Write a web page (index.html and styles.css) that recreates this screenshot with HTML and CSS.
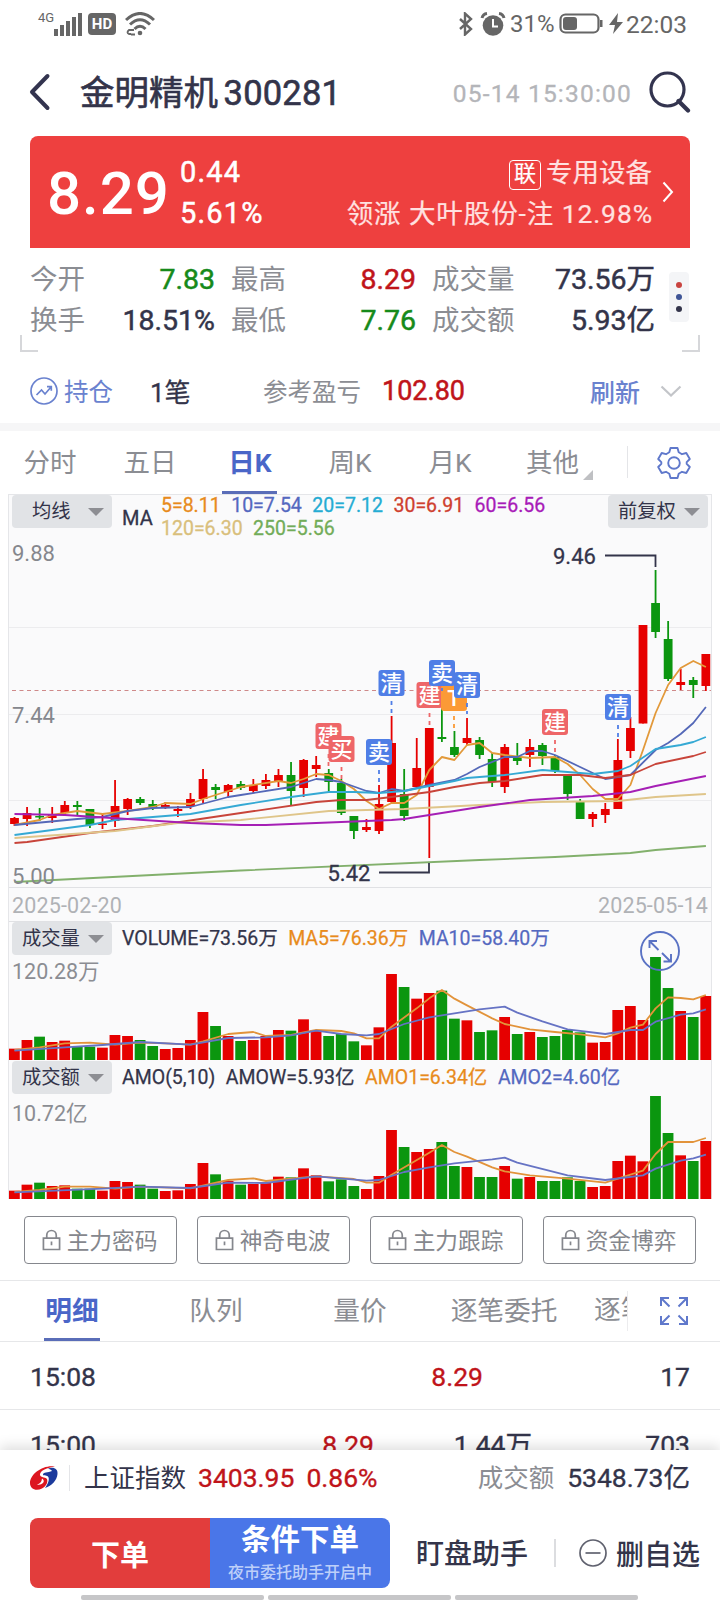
FILE: index.html
```html
<!DOCTYPE html>
<html lang="zh-CN">
<head>
  <meta charset="UTF-8">
  <meta name="viewport" content="width=device-width, initial-scale=1.0">
  <title>金明精机 300281</title>
  <link rel="stylesheet" href="styles.css">
</head>
<body>
  <div class="page">
    <div class="status">
      <span class="net">4G</span>
      <svg class="signal" width="29" height="24" viewBox="0 0 29 24"><path d="M2 17v7M8 13v11M14 9v15M20 5v19M26 1v23" stroke="#666" stroke-width="4"/></svg>
      <span class="hd">HD</span>
      <svg class="wifi" width="30" height="24" viewBox="0 0 30 24" fill="none" stroke="#666" stroke-width="3">
        <path d="M1 8Q15-5 29 8M5 12.500Q15 3 25 12.500M9.500 17Q15 11.500 20.500 17"/>
        <circle cx="15" cy="21" r="2.300" fill="#666" stroke="none"/>
        <path d="M9 18H4q-3 2.500 0 4h2M6 22.500h4" stroke-width="1.800"/>
      </svg>
      <div class="status-right">
        <svg width="16" height="24" viewBox="0 0 16 24" fill="none" stroke="#666" stroke-width="2.400"><path d="M2 7l11 10-6 5.500V1.500L13 7 2 17"/></svg>
        <svg class="alarm" width="26" height="24" viewBox="0 0 26 24">
          <circle cx="13" cy="13.500" r="10.300" fill="#666"/>
          <path d="M2 6Q3 2 7 1.500M24 6q-1-4-5-4.500" stroke="#666" stroke-width="3" fill="none"/>
          <path d="M13 7v7.500h5" stroke="#fff" stroke-width="2" fill="none"/>
        </svg>
        <span class="percent">31%</span>
        <svg class="battery" width="44" height="22" viewBox="0 0 44 22">
          <rect x="1.500" y="1.500" width="38" height="18" rx="5" fill="none" stroke="#666" stroke-width="2.200"/>
          <rect x="4" y="4" width="14" height="13" rx="3" fill="#666"/>
          <rect x="41" y="7" width="2.500" height="7" fill="#666"/>
        </svg>
        <svg class="bolt" width="16" height="22" viewBox="0 0 16 22"><path d="M10 0L1 12h6L5 21 15 9H9z" fill="#666"/></svg>
        <span class="clock">22:03</span>
      </div>
    </div>

    <div class="title-bar">
      <svg width="22" height="38" viewBox="0 0 22 38"><path d="M18.500 3L3 19l15.500 16" fill="none" stroke="#33344f" stroke-width="4" stroke-linecap="round" stroke-linejoin="round"/></svg>
      <h1>金明精机 <span>300281</span></h1>
      <span class="datetime">05-14 15:30:00</span>
      <svg class="search" width="42" height="42" viewBox="0 0 42 42" fill="none" stroke="#33344f"><circle cx="18.500" cy="18.500" r="16.500" stroke-width="3.200"/><path d="M29.500 30l9.500 9.500" stroke-width="4.200" stroke-linecap="round"/></svg>
    </div>

    <div class="banner">
      <div class="price">8.29</div>
      <div class="change"><span>0.44</span><span>5.61%</span></div>
      <div class="sector">
        <div><span class="tag">联</span>专用设备</div>
        <div>领涨 大叶股份-注 12.98%</div>
      </div>
      <svg width="12" height="22" viewBox="0 0 12 22"><path d="M1.500 1.500l8.500 9.500-8.500 9.500" fill="none" stroke="#fff" stroke-width="2"/></svg>
    </div>

    <div class="quote">
      <div class="quote-grid">
        <span class="label">今开</span><span class="down">7.83</span>
        <span class="label">最高</span><span class="up">8.29</span>
        <span class="label">成交量</span><span>73.56万</span>
        <span class="label">换手</span><span>18.51%</span>
        <span class="label">最低</span><span class="down">7.76</span>
        <span class="label">成交额</span><span>5.93亿</span>
      </div>
      <div class="dots"><i></i><i></i><i></i></div>
      <div class="corner left"></div>
      <div class="corner right"></div>
    </div>

    <div class="position">
      <svg width="28" height="28" viewBox="0 0 28 28" fill="none" stroke="#6a82cf" stroke-width="1.700"><circle cx="14" cy="14" r="13"/><path d="M6.500 18l5-5 3.500 4 6-7M17 9.700h4.300v4"/></svg>
      <span class="hold">持仓</span>
      <span class="count">1笔</span>
      <span class="profit-label">参考盈亏</span>
      <span class="profit">102.80</span>
      <span class="refresh">刷新</span>
      <svg width="22" height="12" viewBox="0 0 22 12"><path d="M1.500 1.500l9.500 9 9.500-9" fill="none" stroke="#c3c5c9" stroke-width="2.200"/></svg>
    </div>

    <div class="period-tabs">
      <span>分时</span><span>五日</span><span class="active">日K</span><span>周K</span><span>月K</span><span class="more">其他</span>
      <div class="settings">
        <svg width="34" height="34" viewBox="0 0 34 34" fill="none" stroke="#5f78cb" stroke-width="1.900" stroke-linejoin="round">
          <path d="M13.500 2h7l1.200 4.300 3.300 1.900 4.300-1.200 3.500 6-3.100 3.100v1.800l3.100 3.100-3.500 6-4.300-1.200-3.300 1.900-1.200 4.300h-7l-1.200-4.300L9 25.800 4.700 27l-3.500-6 3.100-3.100v-1.800L1.200 13l3.500-6L9 8.200l3.300-1.900z"/><circle cx="17" cy="17" r="5.800"/>
        </svg>
      </div>
    </div>

    <div class="chart">
      <div class="price-pane">
        <svg id="price" width="704" height="393" viewBox="8 494 704 393"></svg>
        <div class="pane-head">
          <span class="select">均线</span>
          <span class="ma-name">MA</span>
          <div class="ma-list">
            <span class="c5">5=8.11</span><span class="c10">10=7.54</span><span class="c20">20=7.12</span><span class="c30">30=6.91</span><span class="c60">60=6.56</span><br><span class="c120">120=6.30</span><span class="c250">250=5.56</span>
          </div>
          <span class="select adjust">前复权</span>
        </div>
      </div>
      <div class="dates"><span>2025-02-20</span><span>2025-05-14</span></div>
      <div class="bar-pane">
        <svg id="volume" width="704" height="138" viewBox="8 922 704 138"></svg>
        <div class="pane-head">
          <span class="select">成交量</span>
          <div class="values"><span>VOLUME=73.56万</span><span class="c5">MA5=76.36万</span><span class="c10">MA10=58.40万</span></div>
        </div>
        <div class="scale">120.28万</div>
        <svg class="zoom" width="40" height="40" viewBox="0 0 40 40" fill="none" stroke="#5a72c4" stroke-width="1.900"><circle cx="20" cy="20" r="19"/><path d="M9.500 17v-7H17M9.500 10l9 9M22 22l8.500 8.500M31 23v7.500h-7.500"/></svg>
      </div>
      <div class="bar-pane amount-pane">
        <svg id="amount" width="704" height="139" viewBox="8 1060 704 139"></svg>
        <div class="pane-head">
          <span class="select">成交额</span>
          <div class="values"><span>AMO(5,10)</span><span>AMOW=5.93亿</span><span class="c5">AMO1=6.34亿</span><span class="c10">AMO2=4.60亿</span></div>
        </div>
        <div class="scale">10.72亿</div>
      </div>
    </div>

    <div class="tools">
      <button><svg class="lock" viewBox="0 0 20 22"><path d="M1.500 9h17v12h-17zM5 9V6a5 5 0 0 1 10 0v3M10 12.500v4"/></svg>主力密码</button>
      <button><svg class="lock" viewBox="0 0 20 22"><path d="M1.500 9h17v12h-17zM5 9V6a5 5 0 0 1 10 0v3M10 12.500v4"/></svg>神奇电波</button>
      <button><svg class="lock" viewBox="0 0 20 22"><path d="M1.500 9h17v12h-17zM5 9V6a5 5 0 0 1 10 0v3M10 12.500v4"/></svg>主力跟踪</button>
      <button><svg class="lock" viewBox="0 0 20 22"><path d="M1.500 9h17v12h-17zM5 9V6a5 5 0 0 1 10 0v3M10 12.500v4"/></svg>资金博弈</button>
    </div>

    <div class="detail-tabs">
      <span class="active">明细</span><span>队列</span><span>量价</span><span>逐笔委托</span><span class="cut">逐笔</span>
      <svg width="28" height="28" viewBox="0 0 28 28" fill="none" stroke="#5f78cb" stroke-width="2"><path d="M1 9V1h8M1 1l8.500 8.500M19 1h8v8M27 1l-8.500 8.500M1 19v8h8M1 27l8.500-8.500M27 19v8h-8M27 27l-8.500-8.500"/></svg>
    </div>

    <div class="ticks">
      <div class="tick"><span>15:08</span><span class="up wide">8.29</span><span>17</span></div>
      <div class="tick"><span>15:00</span><span class="up">8.29</span><span class="lots">1.44万</span><span>703</span></div>
    </div>

    <div class="footer">
      <div class="index">
        <svg width="28" height="24" viewBox="0 0 28 24">
          <path d="M18 2.500C24 .5 28 3 27.500 8 27 14 22 20 15 22 18 18 20 13 18 10.500 16 9 13 10 13 8.500 13 6 18 7 22 5 21 3.500 19.500 3 18 2.500z" fill="#1c3a9c"/>
          <path d="M25 .5C13-1.500 0 8 0 17 0 23 6 25.500 12 22.500 17 20 18.500 14.500 16.500 12.500 15 11 10.500 11.500 10 9 9.500 5 17 1.500 25 .5z" fill="#dc1620"/>
          <path d="M12 12.500q3 2 1 4.500-2.500 2.500-6 1.500 4.500-1 5-6z" fill="#fff"/>
        </svg>
        <span class="name">上证指数</span><span class="up">3403.95</span><span class="up pct">0.86%</span>
        <span class="turnover">成交额</span><span>5348.73亿</span>
      </div>
      <div class="actions">
        <button class="order">下单</button>
        <button class="condition">条件下单<small>夜市委托助手开启中</small></button>
        <span class="watch">盯盘助手</span>
        <span class="remove"><svg width="28" height="28" viewBox="0 0 28 28" fill="none" stroke="#60626f" stroke-width="1.700"><circle cx="14" cy="14" r="13"/><path d="M6.500 14h15"/></svg>删自选</span>
      </div>
      <div class="nav"><i></i><i></i><i></i></div>
    </div>
  </div>
  <script src="chart.js"></script>
</body>
</html>
```
FILE: styles.css
```css
* {
  box-sizing: border-box;
}
body {
  margin: 0;
  background: #fff;
  font-family: Roboto, "Noto Sans CJK SC", sans-serif;
  color: #33344a;
}
.page {
  width: 720px;
  height: 1600px;
  overflow: hidden;
  display: flex;
  flex-direction: column;
}
.page > div {
  flex: none;
}
svg {
  display: block;
  flex: none;
}
button {
  font-family: inherit;
  padding: 0;
}
.up {
  color: #c0141a;
}
.down {
  color: #168a1a;
}

/* status bar */
.status {
  height: 48px;
  padding: 0 33px 0 38px;
  display: flex;
  align-items: center;
  color: #666;
}
.net {
  width: 16px;
  font-size: 13px;
  margin-top: -14px;
}
.hd {
  width: 28px;
  height: 22px;
  margin: 0 9px 0 5px;
  border-radius: 4px;
  background: #666;
  color: #fff;
  font-size: 15px;
  font-weight: 700;
  line-height: 22px;
  text-align: center;
}
.status-right {
  margin-left: auto;
  display: flex;
  align-items: center;
  font-size: 24.500px;
}
.alarm {
  margin: 0 4px 0 6px;
}
.percent {
  width: 49px;
  font-size: 24px;
}
.bolt {
  margin: 0 2px 0 5px;
}

/* title */
.title-bar {
  height: 88px;
  padding: 0 29px;
  display: flex;
  align-items: center;
}
h1 {
  margin: -4px 0 0 29px;
  font-size: 34.500px;
  font-weight: 400;
  -webkit-text-stroke: 0.600px;
  white-space: nowrap;
}
h1 span {
  margin-left: -3px;
  letter-spacing: 0.200px;
}
.datetime {
  margin: 2px 17px 0 auto;
  color: #b4b5b9;
  font-size: 24.500px;
  -webkit-text-stroke: 0.300px;
  letter-spacing: 1.200px;
}

/* red banner */
.banner {
  height: 112px;
  margin: 0 30px;
  padding: 0 16px 0 17px;
  border-radius: 8px 8px 0 0;
  background: #ee403f;
  color: #fff;
  display: flex;
  align-items: center;
}
.price {
  width: 133px;
  font-size: 60px;
  font-weight: 500;
  letter-spacing: 1px;
  line-height: 112px;
  padding-top: 3px;
}
.change {
  display: flex;
  flex-direction: column;
  font-size: 29px;
  -webkit-text-stroke: 0.500px;
  line-height: 41px;
  letter-spacing: 1.200px;
  padding-top: 2px;
}
.sector {
  margin: 2px 9px 0 auto;
  font-size: 26.500px;
  line-height: 41px;
  text-align: right;
  color: #ffe1e0;
  -webkit-text-stroke: 0.200px;
  letter-spacing: 0.900px;
  white-space: nowrap;
}
.sector div:first-child {
  letter-spacing: 0;
  padding-right: 1px;
}
.tag {
  display: inline-block;
  width: 32px;
  height: 30px;
  margin-right: 5px;
  border: 1.500px solid #fff;
  border-radius: 4px;
  color: #fff;
  font-size: 22px;
  line-height: 26px;
  text-align: center;
  vertical-align: 1px;
}

/* quote numbers */
.quote {
  position: relative;
  height: 104px;
  padding: 12px 0 0 30px;
}
.quote-grid {
  display: grid;
  grid-template-columns: 70px 115px 80px 121px 100px 139px;
  font-size: 28.500px;
  -webkit-text-stroke: 0.500px;
  line-height: 40.500px;
}
.quote-grid span:nth-child(even) {
  text-align: right;
}
.quote-grid span:nth-child(6n+3),
.quote-grid span:nth-child(6n+5) {
  padding-left: 16px;
}
.quote-grid .label {
  color: #8b8d93;
  font-size: 27.500px;
  -webkit-text-stroke: 0;
}
.dots {
  position: absolute;
  left: 669px;
  top: 24px;
  width: 20px;
  height: 50px;
  border-radius: 4px;
  background: #f4f5f7;
  display: flex;
  flex-direction: column;
  align-items: center;
  justify-content: center;
  gap: 6px;
}
.dots i {
  width: 6px;
  height: 6px;
  border-radius: 50%;
  background: #33344a;
}
.dots i:nth-child(1) {
  background: #c94440;
}
.dots i:nth-child(2) {
  background: #3f5596;
}
.corner {
  position: absolute;
  bottom: 0;
  width: 18px;
  height: 17px;
  border: 2px solid #d6d7da;
  border-top: 0;
}
.corner.left {
  left: 20px;
  border-right: 0;
}
.corner.right {
  right: 20px;
  border-left: 0;
}

/* position row */
.position {
  height: 79px;
  padding: 6px 38px 0 30px;
  border-bottom: 8px solid #f6f6f7;
  display: flex;
  align-items: center;
  font-size: 24.500px;
}
.hold {
  width: 86px;
  padding-left: 6px;
  color: #6a82cf;
}
.count {
  width: 119px;
  padding-left: 6px;
  font-size: 26px;
  -webkit-text-stroke: 0.300px;
}
.profit-label {
  color: #8b8d93;
}
.profit {
  margin-left: 21px;
  font-size: 27px;
  -webkit-text-stroke: 0.500px;
  color: #c0141a;
}
.refresh {
  margin: 0 20px 0 auto;
  font-size: 25px;
  font-weight: 500;
  color: #6a82cf;
}

/* chart period */
.period-tabs {
  height: 63px;
  display: flex;
  font-size: 26.500px;
  line-height: 64px;
  color: #8b8d93;
}
.period-tabs > span {
  width: 100px;
  height: 63px;
  text-align: center;
}
.period-tabs .active {
  position: relative;
  color: #4a66c8;
  font-weight: 700;
}
.period-tabs .active::after {
  content: "";
  position: absolute;
  left: 22px;
  bottom: 0;
  width: 55px;
  height: 3px;
  background: #5a6db8;
}
.period-tabs .more {
  position: relative;
  width: 105px;
}
.more::after {
  content: "";
  position: absolute;
  left: 83px;
  top: 39px;
  border-left: 10px solid transparent;
  border-bottom: 10px solid #bfc0c3;
}
.settings {
  width: 93px;
  height: 32px;
  margin-left: 22px;
  margin-top: 15px;
  border-left: 1px solid #e4e5e8;
  padding-left: 29px;
}

/* chart */
.chart {
  width: 704px;
  margin-left: 8px;
  border: 1px solid #e5e6e9;
  border-bottom: 0;
  background: #fafafb;
  height: 705px;
  display: flex;
  flex-direction: column;
}
.chart svg text {
  font-family: Roboto, "Noto Sans CJK SC", sans-serif;
}
.price-pane,
.bar-pane {
  position: relative;
  height: 138px;
}
.price-pane {
  height: 392px;
}
.price-pane > svg,
.bar-pane > svg {
  position: absolute;
  left: -1px;
  top: -1px;
}
.bar-pane > svg {
  top: 0;
}
.pane-head {
  position: relative;
  padding: 0 3px;
  height: 33px;
  display: flex;
}
.select {
  width: 100px;
  height: 33px;
  padding: 0 8px 0 10px;
  border-radius: 4px;
  background: #e1e3e6;
  font-size: 19.300px;
  line-height: 35px;
  display: flex;
  align-items: center;
  justify-content: space-between;
}
.select::after {
  content: "";
  border: 8px solid transparent;
  border-top-color: #8d8e93;
  border-bottom: 0;
}
.price-pane .select:first-child {
  padding-left: 20px;
}
.ma-name {
  width: 30px;
  margin: 11px 9px 0 10px;
  font-size: 20px;
  -webkit-text-stroke: 0.300px;
  line-height: 24px;
}
.ma-list {
  font-size: 19.500px;
  -webkit-text-stroke: 0.300px;
  line-height: 23px;
  white-space: nowrap;
  margin-top: -1px;
}
.ma-list span {
  margin-right: 10.500px;
}
.adjust {
  margin-left: auto;
}
.values {
  display: flex;
  gap: 10.500px;
  margin-left: 10px;
  font-size: 19.500px;
  -webkit-text-stroke: 0.250px;
  line-height: 33px;
  white-space: nowrap;
}
.scale {
  position: relative;
  margin: 0 0 0 3px;
  font-size: 21.500px;
  line-height: 33px;
  color: #8b8d93;
}
.amount-pane .pane-head {
  padding-top: 1px;
}
.amount-pane .scale {
  margin-top: 4px;
}
.bar-pane > svg.zoom {
  left: 631px;
  top: 9px;
}
.c5 { color: #e88b1c; }
.c10 { color: #5468c0; }
.c20 { color: #25acd3; }
.c30 { color: #cf3f2f; }
.c60 { color: #a81bb8; }
.c120 { color: #d9bf7c; }
.c250 { color: #72ac58; }
.dates {
  height: 35px;
  padding: 0 3px;
  border-top: 1px solid #e0e1e4;
  border-bottom: 1px solid #e0e1e4;
  display: flex;
  justify-content: space-between;
  font-size: 21.500px;
  line-height: 35px;
  color: #b0b2b6;
  letter-spacing: 0.150px;
}

/* locked indicators */
.tools {
  height: 82px;
  padding: 17px 24px 0;
  border-bottom: 1px solid #e6e7e9;
  display: flex;
  justify-content: space-between;
}
.tools button {
  width: 153px;
  height: 48px;
  padding: 0 2px 1px 0;
  border: 1px solid #85878d;
  border-radius: 4px;
  background: #fff;
  color: #85878d;
  font-size: 22.700px;
  display: flex;
  align-items: center;
  justify-content: center;
  gap: 6px;
}
.lock {
  width: 19px;
  height: 22px;
  fill: none;
  stroke: #85878d;
  stroke-width: 1.800;
}

/* details */
.detail-tabs {
  height: 61px;
  border-bottom: 1px solid #e6e7e9;
  display: flex;
  align-items: center;
  font-size: 26.700px;
  line-height: 61px;
  color: #8b8d93;
}
.detail-tabs span {
  width: 144px;
  height: 60px;
  text-align: center;
  white-space: nowrap;
}
.detail-tabs .active {
  position: relative;
  color: #4a66c8;
  font-weight: 700;
}
.detail-tabs .active::after {
  content: "";
  position: absolute;
  left: 44px;
  bottom: 0;
  width: 56px;
  height: 3px;
  background: #5a6db8;
}
.detail-tabs .cut {
  width: 34px;
  height: 40px;
  line-height: 39px;
  margin: 0 32px 0 18px;
  overflow: hidden;
  text-align: left;
  border-right: 1px solid #ececee;
}
.ticks {
  height: 108px;
  overflow: hidden;
}
.tick {
  height: 68px;
  padding: 0 30px;
  border-bottom: 1px solid #e6e7e9;
  display: grid;
  grid-template-columns: 240px 104px 158px 1fr;
  font-size: 26.500px;
  -webkit-text-stroke: 0.350px;
  line-height: 70px;
}
.tick span:not(:first-child) {
  text-align: right;
}
.tick .wide {
  grid-column: 2 / 4;
  padding-right: 49px;
}

/* bottom panel */
.footer {
  position: relative;
  height: 150px;
  background: #fff;
  box-shadow: 0 -4px 12px rgba(0, 0, 0, 0.13);
  display: flex;
  flex-direction: column;
}
.index {
  height: 56px;
  padding: 0 30px;
  display: flex;
  align-items: center;
  font-size: 26.500px;
  -webkit-text-stroke: 0.350px;
  line-height: 26px;
}
.index .name {
  margin: 0 12px 0 11px;
  padding-left: 14px;
  border-left: 1px solid #e4e5e8;
  font-size: 25.500px;
  -webkit-text-stroke: 0;
}
.index .pct {
  margin-left: 12px;
}
.index .turnover {
  margin: 0 13px 0 auto;
  color: #8b8d93;
  font-size: 25.500px;
  -webkit-text-stroke: 0;
}
.actions {
  height: 70px;
  margin-top: 12px;
  padding-left: 30px;
  display: flex;
  align-items: center;
  font-size: 28px;
  font-weight: 500;
}
.actions button {
  width: 180px;
  height: 70px;
  border: 0;
  color: #fff;
  font-size: 29px;
  font-weight: 700;
}
.actions .order {
  background: #e23d3c;
  border-radius: 8px 0 0 8px;
  padding-bottom: 1px;
}
.actions .condition {
  background: #4a76e8;
  border-radius: 0 8px 8px 0;
  font-size: 29.500px;
  line-height: 38px;
  padding-top: 2px;
}
.condition small {
  display: block;
  font-size: 16px;
  font-weight: 500;
  line-height: 28px;
  color: #bdcff9;
}
.watch {
  margin: -2px 26px 0;
}
.remove {
  height: 28px;
  padding-left: 23px;
  border-left: 2px solid #dcdde0;
  display: flex;
  align-items: center;
  gap: 9px;
}
.nav {
  margin: 7px 0 0 81px;
  display: flex;
  gap: 4px;
}
.nav i {
  width: 183px;
  height: 5px;
  border-radius: 2px;
  background: #c6c6c8;
}
```
FILE: chart.js
```js
const RED = '#e60000';
const GREEN = '#0b960f';
const STEP = 12.57;
const cx = i => 14.5 + i * STEP;

// color, high, body top, body bottom, low
const candles = [
  ['R', 817, 818, 824, 826], ['R', 807, 813, 819, 826], ['G', 808, 816, 817, 821], ['R', 807, 815, 818, 823],
  ['R', 801, 805, 813, 815], ['G', 801, 805, 807, 815], ['G', 809, 809, 825, 828], ['R', 814, 823.5, 825, 829],
  ['R', 780, 806, 821, 827], ['R', 798, 799, 809, 815], ['G', 797, 799, 803, 805], ['G', 800, 804, 807, 810],
  ['R', 802, 805, 807, 809], ['R', 806, 809, 811, 817], ['R', 793, 799, 806, 809], ['R', 769, 779, 799, 803],
  ['G', 784, 787, 790, 799], ['R', 784, 785, 792, 797], ['G', 781, 784, 788, 790], ['R', 779, 785, 791, 793],
  ['R', 774, 780, 786, 789], ['R', 769, 775, 782, 787], ['G', 762, 775, 791, 805], ['R', 759, 760, 788, 797],
  ['R', 756, 765, 769, 777], ['G', 769, 773, 782, 791], ['G', 779, 783, 813, 815], ['G', 816, 816, 831, 839],
  ['R', 819, 827, 830, 832], ['R', 785, 804, 831, 834], ['R', 716, 743, 802, 803], ['G', 769, 794, 816, 821],
  ['R', 738, 768, 787, 787], ['R', 728, 728, 787, 858], ['G', 707, 737, 739, 742], ['G', 731, 747, 755, 757],
  ['R', 718, 738, 743, 745], ['G', 737, 740, 755, 759], ['G', 753, 759, 782, 787], ['R', 744, 747, 787, 793],
  ['G', 743, 757, 761, 765], ['R', 739, 747, 755, 767], ['G', 743, 745, 756, 765], ['G', 755, 757, 771, 773],
  ['G', 775, 776, 794, 800], ['G', 799, 802, 819, 819], ['R', 812, 814, 819, 827], ['R', 803, 809, 815, 823],
  ['R', 739, 760, 809, 809], ['R', 717, 728, 751, 758], ['R', 625, 625, 723.5, 723.5], ['G', 570, 603, 632, 638],
  ['G', 621, 639, 679, 681], ['R', 669, 682, 685, 690], ['G', 677, 680, 685, 698], ['R', 654, 654, 686, 691]
];

// [index, y] pairs
const averages = [
  ['#e2993a', [[0, 825], [2, 820], [3, 815], [5, 811], [7, 814], [9, 811], [11, 807], [12, 803], [14, 804], [15, 799], [16, 795], [18, 787], [19, 785], [21, 781], [22, 783], [23, 779], [24, 774], [25, 775], [26, 781], [27, 789], [28, 801], [29, 809], [30, 803], [31, 803], [32, 795], [33, 770], [34, 757], [35, 760], [36, 745], [37, 743], [38, 753], [39, 755], [41, 758], [43, 757], [44, 764], [45, 775], [46, 789], [47, 799], [48, 799], [49, 785], [50, 750], [51, 713], [52, 685], [53, 668], [54, 661], [55, 667]]],
  ['#5468b8', [[0, 825], [5, 819], [7, 817], [9, 811], [11, 808], [14, 807], [17, 797], [18, 795], [22, 787], [24, 779], [25, 780], [26, 782], [28, 791], [29, 793], [30, 789], [31, 791], [33, 785], [35, 780], [36, 774], [37, 767], [39, 757], [40, 757], [41, 751], [42, 751], [43, 755], [45, 767], [47, 779], [49, 775], [51, 750], [52, 743], [53, 734], [54, 723], [55, 707]]],
  ['#35a9d4', [[0, 835], [6, 825], [8, 820], [11, 817], [14, 814], [18, 805], [22, 797], [25, 792], [27, 792], [29, 793], [31, 791], [33, 786], [35, 781], [36, 778], [37, 777], [39, 775], [42, 770], [46, 774], [48, 771], [49, 766], [51, 749], [53, 745], [54, 742], [55, 737]]],
  ['#c8443a', [[0, 843], [1, 842], [6, 833], [11, 826], [18, 813], [24, 802], [26, 800], [28, 800], [30, 797], [33, 792], [35, 787], [37, 783], [39, 781], [42, 775], [45, 775], [47, 778], [49, 775], [51, 764], [54, 756], [55, 752]]],
  ['#dfc58a', [[0, 838], [8, 831], [13, 823], [18, 820], [25, 811], [31, 809], [37, 805], [42, 802], [48, 801], [51, 797], [55, 794]]],
  ['#a51fb5', [[0, 814], [4, 815], [9, 819], [14, 823], [18, 825], [20, 825], [26, 822], [30, 820], [31, 819], [33, 815], [37, 807], [41, 800], [46, 796], [49, 792], [51, 786], [55, 776]]],
  ['#82b06c', [[0, 882], [18, 870.5], [37, 860], [43, 857], [49, 853], [51, 850], [55, 846]]]
];

// x, y, text, color, end of the dashed stem
const marks = [
  [328.5, 736, '建', '#ee6668', 766], [341.5, 749, '买', '#ee6668', 779], [379, 752, '卖', '#4f7ee6', 784],
  [391.5, 683, '清', '#4f7ee6', 714], [429.5, 695, '建', '#ee6668', 725], [454, 698, 'T', '#fb9a36', 728],
  [442, 673, '卖', '#4f7ee6', 688], [467, 685, '清', '#4f7ee6', 714], [555, 722, '建', '#ee6668', 752], [618, 707, '清', '#4f7ee6', 738]
];

const volumeTops = [506, 480, 470, 486, 482, 500, 500, 503, 465, 468, 480, 498, 507, 504, 480, 396, 438, 468, 483, 480, 468, 450, 452, 418, 450, 468, 462, 484, 496, 442, 282, 321, 356, 339, 332, 416, 421, 456, 451, 411, 462, 456, 471, 468, 450, 457, 488, 486, 390, 378, 420, 231, 324, 393, 411, 348];
const amountTops = [932, 914, 908, 918, 916, 926, 926, 932, 903, 906, 914, 926, 933, 931, 912, 849, 883, 903, 914, 912, 906, 890, 892, 865, 886, 904, 898, 918, 927, 888, 750, 801, 816, 807, 786, 858, 861, 891, 891, 858, 896, 891, 903, 903, 892, 903, 921, 918, 843, 827, 844, 648, 759, 826, 843, 783];
const volumeLines = [
  ['#e2933a', [[0, 510], [2, 502], [4, 490], [6, 488], [8, 494], [10, 488], [12, 490], [14, 494], [15, 484], [17, 462], [19, 456], [20, 468], [22, 465], [24, 450], [26, 453], [27, 460], [28, 475], [29, 475], [30, 440], [32, 385], [33, 355], [34, 330], [35, 356], [36, 376], [38, 415], [39, 432], [41, 448], [43, 456], [45, 463], [47, 472], [48, 460], [49, 443], [50, 434], [51, 385], [52, 352], [53, 354], [54, 358], [55, 345]]],
  ['#6673c4', [[0, 512], [4, 502], [7, 495], [10, 486], [14, 494], [17, 474], [20, 472], [22, 466], [24, 452], [26, 462], [28, 466], [29, 462], [31, 432], [33, 412], [35, 400], [37, 388], [39, 380], [40, 398], [42, 424], [44, 448], [47, 462], [49, 450], [50, 450], [51, 425], [53, 404], [54, 400], [55, 388]]]
];
const amountLines = [
  ['#e2933a', [[0, 936], [2, 930], [4, 920], [6, 920], [8, 926], [10, 920], [14, 925], [17, 900], [19, 895], [20, 903], [24, 889], [27, 897], [28, 908], [29, 908], [30, 884], [33, 818], [34, 795], [35, 816], [36, 830], [38, 862], [39, 874], [41, 886], [44, 896], [47, 908], [49, 884], [50, 872], [51, 822], [52, 786], [54, 786], [55, 774]]],
  ['#6673c4', [[0, 937], [7, 926], [10, 920], [14, 924], [17, 908], [20, 909], [24, 889], [28, 902], [29, 900], [31, 876], [33, 862], [35, 850], [38, 838], [39, 833], [40, 848], [44, 886], [47, 900], [50, 886], [51, 866], [53, 842], [54, 835], [55, 824]]]
];

function polyline(color, points) {
  const list = points.map(p => cx(p[0]).toFixed(1) + ',' + p[1]).join(' ');
  return `<polyline points="${list}" fill="none" stroke="${color}" stroke-width="1.8" stroke-linejoin="round"/>`;
}

function rule(y) {
  return `<path d="M9 ${y}H711" stroke="#ececee"/>`;
}

function drawPrice() {
  let out = rule(627.5) + rule(714.5) + rule(800.5);
  out += '<path d="M12 690.5H711" stroke="#cf8a8a" stroke-width="1.2" stroke-dasharray="4 3.5"/>';
  candles.forEach(([c, high, top, bottom, low], i) => {
    const color = c === 'R' ? RED : GREEN;
    const x = cx(i);
    out += `<path d="M${x} ${high}V${low}" stroke="${color}" stroke-width="1.8"/>`;
    out += `<rect x="${x - 4.4}" y="${top}" width="8.8" height="${Math.max(bottom - top, 1.5)}" fill="${color}"/>`;
  });
  averages.forEach(([color, points]) => { out += polyline(color, points); });
  out += '<g fill="#85878d" font-size="22"><text x="12" y="561">9.88</text><text x="12" y="723">7.44</text><text x="12" y="884">5.00</text></g>';
  out += '<path d="M605 555.500H655.500V567M379 872.500H429V863" fill="none" stroke="#33344a" stroke-width="1.800"/>';
  out += '<g fill="#33344a" stroke="#33344a" stroke-width="0.3" font-size="22"><text x="553" y="564">9.46</text><text x="327.500" y="880.500">5.42</text></g>';
  marks.forEach(([x, y, text, color, end]) => {
    out += `<path d="M${x} ${y + 18}V${end}" stroke="${color}" stroke-width="1.8" stroke-dasharray="4 4"/>`;
    out += `<rect x="${x - 13}" y="${y - 13}" width="26" height="26" rx="3" fill="${color}"/>`;
    out += `<text x="${x}" y="${y + 7.5}" font-size="22" font-weight="500" fill="#fff" text-anchor="middle">${text}</text>`;
  });
  document.getElementById('price').innerHTML = out;
}

// bar tops and lines are stored at three units per pixel
function drawBars(id, tops, lines, base) {
  const y = v => 880 + v / 3;
  let out = '';
  tops.forEach((top, i) => {
    const color = candles[i][0] === 'R' ? RED : GREEN;
    out += `<rect x="${cx(i) - 5.5}" y="${y(top)}" width="10.8" height="${base - y(top)}" fill="${color}"/>`;
  });
  lines.forEach(([color, points]) => {
    out += polyline(color, points.map(p => [p[0], y(p[1])]));
  });
  document.getElementById(id).innerHTML = out;
}

drawPrice();
drawBars('volume', volumeTops, volumeLines, 1060);
drawBars('amount', amountTops, amountLines, 1199);
```
